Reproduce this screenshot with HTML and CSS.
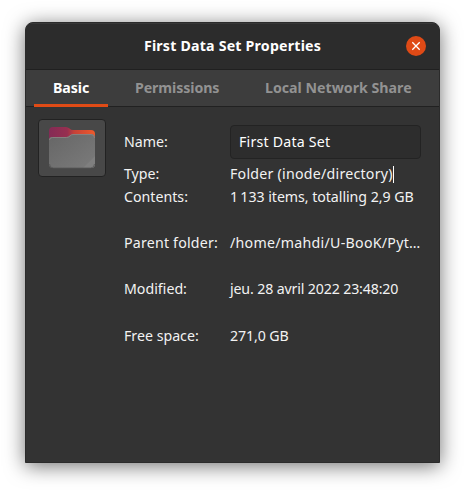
FILE: index.html
```html
<!DOCTYPE html>
<html lang="en">
<head>
<meta charset="utf-8">
<title>First Data Set Properties</title>
<link rel="stylesheet" href="styles.css">
</head>
<body>
<main class="window">
  <header class="titlebar">
    <h1 class="title">First Data Set Properties</h1>
    <button class="close" aria-label="Close"><svg width="20" height="20" viewBox="0 0 20 20"><path d="M6.3 6.3l7.4 7.4M13.7 6.3l-7.4 7.4" stroke="#fff" stroke-width="1.3"/></svg></button>
  </header>
  <nav class="tabs">
    <a class="tab active">Basic</a>
    <a class="tab permissions">Permissions</a>
    <a class="tab share">Local Network Share</a>
  </nav>
  <section class="content">
    <button class="icon-button" aria-label="Folder icon">
      <svg width="48" height="44" viewBox="0 0 48 44">
        <defs>
          <linearGradient id="back" x1="0" x2="1"><stop offset="0" stop-color="#842b55"/><stop offset=".4" stop-color="#972f50"/><stop offset=".55" stop-color="#c64238"/><stop offset="1" stop-color="#ee5a2b"/></linearGradient>
          <linearGradient id="front" x1="0" y1="0" x2="1" y2="1"><stop offset="0" stop-color="#666"/><stop offset="1" stop-color="#7b7b7b"/></linearGradient>
        </defs>
        <path d="M1 13V5q0-4 4-4h13q2 0 3.500 1.500Q23 4 25 4h18q4 0 4 4v6z" fill="url(#back)"/>
        <path d="M1 14q0-3 3-3h14q2 0 3.500-1.500Q23 8 25 8h18q4 0 4 4v26q0 4-4 4H5q-4 0-4-4z" fill="url(#front)"/>
        <path d="M47 30v8q0 4-4 4h-8z" fill="#7f7f7f"/>
        <path d="M1.500 14q0-2.500 3-2.500h14q2 0 3.500-1.500T25 8.500h18q3.500 0 3.500 3.500" fill="none" stroke="#8e8584" stroke-width=".8"/>
        <path d="M1.500 38q0 4 4 4h37q4 0 4-4" fill="none" stroke="#555" stroke-width=".8"/>
      </svg>
    </button>
    <dl class="details">
      <dt>Name:</dt><dd class="entry">First Data Set</dd>
      <dt>Type:</dt><dd class="selected"><span class="type">Folder (inode/directory)</span><i class="caret"></i></dd>
      <dt>Contents:</dt><dd class="contents">1&#8201;133 items, totalling 2,9 GB</dd>
      <dt class="parent">Parent folder:</dt><dd class="path">/home/mahdi/U-BooK/Pyt…</dd>
      <dt>Modified:</dt><dd class="modified">jeu. 28 avril 2022 23:48:20</dd>
      <dt>Free space:</dt><dd class="free">271,0 GB</dd>
    </dl>
  </section>
</main>
</body>
</html>
```
FILE: styles.css
```css
* { box-sizing: border-box; }
body { margin: 0; padding: 22px 25px 28px; height: 491px; background: #fff; overflow: hidden; font: 14.2px "Noto Sans", sans-serif; color: #f2f2f2; }
button { padding: 0; font: inherit; }
.window { height: 441px; border: 1px solid #2b2b2b; border-radius: 8px 8px 0 0; background: #333; overflow: hidden; box-shadow: 0 3px 20px rgba(0,0,0,.56); }
.titlebar { height: 47px; display: grid; grid-template-columns: 1fr auto 1fr; align-items: center; background: #2c2c2c; border-top: 1px solid #383838; border-bottom: 1px solid #202020; }
.title { grid-column: 2; margin: 0; padding-bottom: 2px; font-size: 14.2px; font-weight: 700; letter-spacing: .2px; color: #fff; white-space: nowrap; }
.close { justify-self: end; margin: 0 13px 1px 0; width: 20px; height: 20px; border: 0; border-radius: 50%; background: #df4a16; display: flex; }
.tabs { height: 37px; display: flex; padding-left: 8px; background: #3d3d3d; border-bottom: 1px solid #212121; }
.tab { width: 74px; height: 37px; padding-left: 19px; line-height: 36px; font-weight: 700; color: #929292; white-space: nowrap; }
.tab.active { color: #fff; border-bottom: 3px solid #e04b16; letter-spacing: -.1px; }
.permissions { width: 130px; padding-left: 27px; letter-spacing: -.1px; }
.share { width: 175px; padding-left: 27px; }
.content { display: flex; align-items: flex-start; gap: 18px; padding: 12px 18px 0 12px; }
.icon-button { width: 68px; height: 58px; border: 1px solid #222; border-radius: 4px; background: #484848; display: flex; justify-content: center; align-items: center; }
.details { margin: 6px 0 0; display: grid; grid-template-columns: 94px 191px; column-gap: 12px; grid-template-rows: 34px 30px 16px 76px 16px 78px; align-items: center; white-space: nowrap; line-height: 20px; }
dt, dd { margin: 0; height: 20px; }
.details .entry { height: 34px; padding-left: 8px; line-height: 32px; border: 1px solid #232323; border-radius: 4px; background: #2d2d2d; color: #fff; letter-spacing: .2px; }
.selected { display: flex; align-items: center; }
.type { letter-spacing: .24px; }
.contents { letter-spacing: -.05px; }
.parent { letter-spacing: .2px; }
.path { letter-spacing: .27px; }
.modified { letter-spacing: -.15px; }
.free { letter-spacing: -.12px; }
.caret { width: 1px; height: 17px; background: #fff; }
```
